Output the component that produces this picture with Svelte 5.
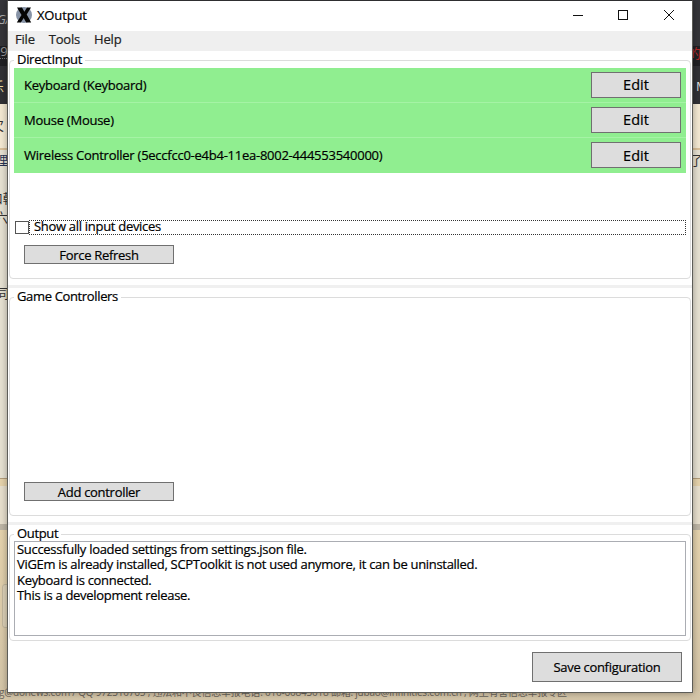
<script>
  const menus = ['File', 'Tools', 'Help'];
  const devices = [
    'Keyboard (Keyboard)',
    'Mouse (Mouse)',
    'Wireless Controller (5eccfcc0-e4b4-11ea-8002-444553540000)',
  ];
  const log = [
    'Successfully loaded settings from settings.json file.',
    'ViGEm is already installed, SCPToolkit is not used anymore, it can be uninstalled.',
    'Keyboard is connected.',
    'This is a development release.',
  ];
  let showAll = $state(false);
</script>

<div class="desktop">
  <div class="browser">
    <div class="nav"></div>
    <div class="page"></div>
    <div class="line"></div>
    <div class="article"></div>
    <div class="band"></div>
    <div class="panel"></div>
    <div class="gap"></div>
    <div class="footer"></div>
  </div>
  <span class="bit ga">GA</span>
  <span class="bit date">29</span>
  <span class="bit star">乐</span>
  <span class="bit han1">欠</span>
  <span class="bit han2">理</span>
  <span class="bit han3">口韩</span>
  <span class="bit han4">六</span>
  <span class="bit han5">同</span>
  <span class="bit red">的</span>
  <span class="bit m">M</span>
  <span class="bit le">了</span>
  <div class="tab"></div>
  <span class="bit contact">g@donews.com / QQ 972310765 , 违法和不良信息举报电话: 010-60843018 邮箱: jubao@infinities.com.cn , 网上有害信息举报专区</span>

  <main class="window">
    <header class="title">
      <svg class="logo" width="16" height="16" viewBox="0 0 16 16">
        <circle cx="8" cy="8" r="8" fill="#8793a6" />
        <path d="M1 .5h5l2.4 4.3L11 .5h4L10.7 7.6 15.2 15.5h-5L7.7 11l-2.9 4.5H.8L5.5 8z" fill="#050505" />
      </svg>
      <span class="name">XOutput</span>
      <svg class="controls" width="104" height="14" viewBox="0 0 104 14" fill="none" stroke="#111" shape-rendering="crispEdges">
        <path d="M1 7.5h10" />
        <path d="M46.5 2.5h9v9h-9z" />
        <path d="M92 2l10 10M102 2L92 12" shape-rendering="auto" />
      </svg>
    </header>

    <nav class="menu">
      {#each menus as item}
        <span>{item}</span>
      {/each}
    </nav>

    <section class="group inputs">
      <h2><span>DirectInput</span></h2>
      <ul>
        {#each devices as device}
          <li>
            <span>{device}</span>
            <button class="edit">Edit</button>
          </li>
        {/each}
      </ul>
      <label>
        <input type="checkbox" bind:checked={showAll} />
        <span class="focus"><span>Show all input devices</span></span>
      </label>
      <button class="small">Force Refresh</button>
    </section>

    <div class="splitter"></div>

    <section class="group controllers">
      <h2><span>Game Controllers</span></h2>
      <button class="small">Add controller</button>
    </section>

    <div class="splitter"></div>

    <section class="group output">
      <h2><span>Output</span></h2>
      <div class="log">
        {#each log as line}
          <p>{line}</p>
        {/each}
      </div>
    </section>

    <footer>
      <button class="save">Save configuration</button>
    </footer>
  </main>
</div>

<style>
  :global(body) {
    margin: 0;
    overflow: hidden;
  }

  .desktop {
    position: relative;
    width: 700px;
    height: 700px;
    overflow: hidden;
    font-family: "Open Sans", "Noto Sans CJK SC", sans-serif;
    font-size: 13px;
    letter-spacing: -0.3px;
    color: #000;
  }

  .browser {
    display: grid;
    height: 700px;
    grid-template-rows: 104px 44px 2px 328px 8px 38px 6px 170px;
  }

  .nav { background: linear-gradient(#353539 0 46px, #202024 46px 66px, #303035 66px); }
  .page { background: #f3e8d2; }
  .line { background: #d9bf98; }
  .article { background: #e6e1d2; }
  .band { background: #e5d2aa; border-top: 1px solid #b29c79; box-sizing: border-box; }
  .panel { background: #e7dfcd; }
  .gap { background: #bdb5a5; }
  .footer { background: linear-gradient(#e5d3ad, #d4c5a8); }

  /* page fragments that stick out behind the window */
  .bit {
    position: absolute;
    line-height: 16px;
    white-space: nowrap;
    color: #333;
  }

  .ga { left: -3px; top: 11px; color: #aaa; font-style: italic; }
  .date { left: -7px; top: 44px; color: #999; border-bottom: 1px dotted #777; line-height: 14px; }
  .star { left: -9px; top: 78px; color: #eed9a0; }
  .han1 { left: -9px; top: 117px; }
  .han2 { left: -5px; top: 152px; color: #263353; }
  .han3 { left: -10px; top: 190px; }
  .han4 { left: -5px; top: 209px; }
  .han5 { left: -4px; top: 285px; }
  .red { left: 688px; top: 45px; color: #b52a2a; }
  .m { left: 696px; top: 78px; color: #ddd; }
  .le { left: 690px; top: 152px; }
  .contact { left: -1px; top: 684px; font-size: 10px; letter-spacing: -0.21px; color: #6a645b; }

  .tab {
    position: absolute;
    left: 2px;
    top: 584px;
    width: 20px;
    height: 42px;
    border: 1px solid #c2b79e;
    border-radius: 3px;
    background: #ded2b8;
  }

  .window {
    position: absolute;
    left: 7px;
    top: 0;
    width: 684px;
    height: 691px;
    display: flex;
    flex-direction: column;
    border: 1px solid #5d5d58;
    border-top-color: #2e2e30;
    background: #fff;
    box-shadow: 0 0 7px rgba(0, 0, 0, 0.35);
    -webkit-text-stroke: 0.2px;
  }

  .title {
    display: flex;
    align-items: center;
    height: 30px;
    padding: 0 16px 2px 8px;
    flex: none;
    box-sizing: border-box;
  }

  .name {
    flex: 1;
    margin-left: 5px;
    letter-spacing: -0.15px;
  }

  .menu {
    display: flex;
    gap: 14px;
    height: 20px;
    padding-left: 7px;
    line-height: 17px;
    letter-spacing: -0.2px;
    background: #efefef;
    color: #222;
    flex: none;
  }

  .group {
    display: flex;
    flex-direction: column;
    margin: 9px 0 0 1px;
    width: 682px;
    box-sizing: border-box;
    border: 1px solid #dcdcdc;
    border-radius: 4px;
    flex: none;
  }

  h2 {
    height: 7px;
    margin: 0 0 0 4px;
    font-size: 13px;
    font-weight: 400;
    line-height: 16px;
    letter-spacing: -0.35px;
    flex: none;
  }

  h2 span {
    display: block;
    width: max-content;
    margin-top: -10px;
    padding: 0 3px;
    background: #fff;
  }

  .inputs { height: 219px; }
  .inputs h2 { letter-spacing: -0.3px; }
  .controllers { height: 219px; }
  .output { height: 107px; }
  .output h2 { height: 6px; }

  ul {
    margin: 0 4px;
    padding: 0;
    list-style: none;
    background: #90ee90;
    letter-spacing: -0.25px;
  }

  li {
    display: flex;
    align-items: center;
    justify-content: space-between;
    height: 35px;
    padding: 0 5px 1px 10px;
    box-sizing: border-box;
    border-bottom: 1px solid #a5f3a5;
  }

  li:last-child { border-bottom: 0; }

  button {
    box-sizing: border-box;
    padding: 0;
    border: 1px solid #707070;
    border-radius: 0;
    background: #ddd;
    color: #000;
    font-family: inherit;
    font-size: 13px;
    letter-spacing: inherit;
  }

  .edit {
    width: 90px;
    height: 26px;
    font-size: 14.5px;
    letter-spacing: 0;
  }

  label {
    display: flex;
    height: 15px;
    margin: 47px 4px 0 5px;
  }

  input {
    appearance: none;
    width: 14px;
    height: 13px;
    margin: 1px 0 0;
    box-sizing: border-box;
    border: 1px solid #555;
    background: #fff;
  }

  .focus {
    flex: 1;
    padding-left: 4px;
    line-height: 11px;
    border: 1px dotted #333;
    box-sizing: border-box;
  }

  .small {
    width: 150px;
    height: 19px;
    margin: 10px 0 0 14px;
    line-height: 16px;
  }

  .controllers .small { margin-top: 177px; }

  .splitter {
    height: 3px;
    margin-top: 6px;
    background: #f0f0f0;
    flex: none;
  }

  .log {
    height: 95px;
    margin: 0 4px;
    padding: 0 2px;
    box-sizing: border-box;
    border: 1px solid #abadb3;
  }

  p {
    margin: 0;
    line-height: 15.4px;
    white-space: nowrap;
  }

  footer {
    display: flex;
    justify-content: flex-end;
    padding: 11px 10px 0 0;
  }

  .save {
    width: 150px;
    height: 30px;
  }
</style>
